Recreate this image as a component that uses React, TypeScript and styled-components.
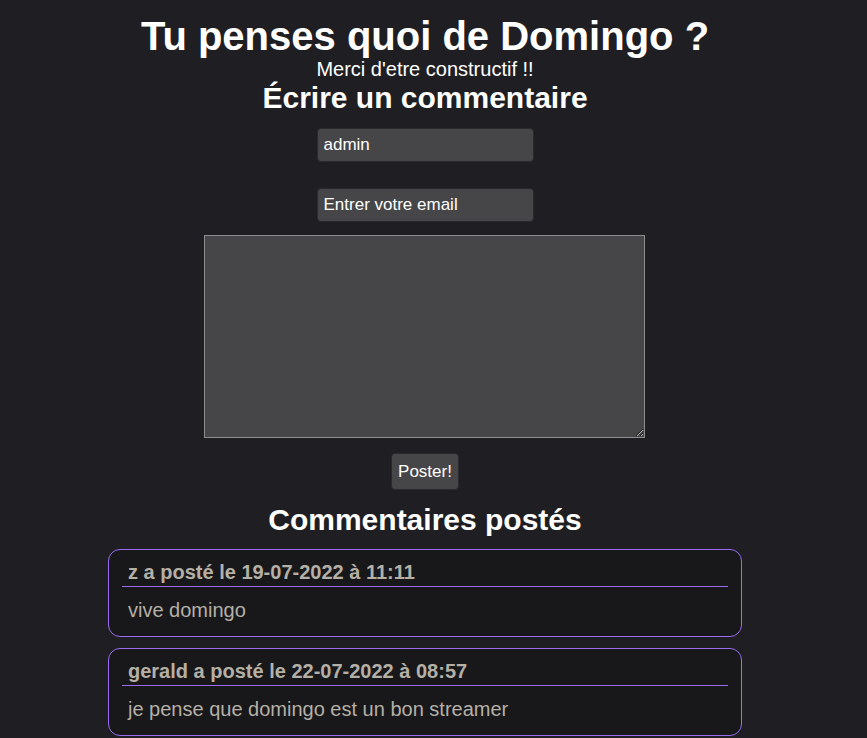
import React from "react";
import styled, { createGlobalStyle } from "styled-components";

const GlobalStyle = createGlobalStyle`
  body {
    margin: 0;
    background-color: #1f1f23;
    color: #ffffff;
    font-family: "Liberation Sans", Arial, sans-serif;
  }
`;

const Page = styled.div`
  display: flex;
  flex-direction: column;
  align-items: center;
  padding: 14px 17px 0 0;
`;

const Title = styled.h1`
  font-size: 40px;
  font-weight: bold;
  margin: 0;
  line-height: 44px;
`;

const Subtitle = styled.p`
  font-size: 20px;
  margin: 0;
  line-height: 23px;
`;

const SectionTitle = styled.h2<{ $top?: number }>`
  font-size: 30px;
  font-weight: bold;
  margin: ${(p) => p.$top ?? 0}px 0 0;
  line-height: 34px;
`;

const Form = styled.form`
  display: flex;
  flex-direction: column;
  align-items: center;
  margin-top: 13px;
`;

const Input = styled.input`
  box-sizing: border-box;
  width: 217px;
  height: 34px;
  margin: 0 0 26px;
  padding: 0 6px;
  border: 1px solid #2a2a2e;
  border-radius: 4px;
  background-color: #464649;
  color: #ffffff;
  font-family: inherit;
  font-size: 17px;
  &::placeholder {
    color: #ffffff;
  }
  &:last-of-type {
    margin-bottom: 13px;
  }
`;

const TextArea = styled.textarea`
  box-sizing: border-box;
  width: 441px;
  height: 203px;
  margin: 0 1px 0 0;
  border: 1px solid #8d8d8d;
  background-color: #464649;
  color: #ffffff;
  font-family: inherit;
  display: block;
`;

const Button = styled.button`
  margin-top: 15px;
  height: 37px;
  padding: 0 6px;
  border: 1px solid #2a2a2e;
  border-radius: 4px;
  background-color: #464649;
  color: #ffffff;
  font-family: inherit;
  font-size: 17px;
`;

const List = styled.div`
  display: flex;
  flex-direction: column;
  gap: 11px;
  width: 634px;
  margin-top: 12px;
`;

const Card = styled.div`
  box-sizing: border-box;
  border: 1px solid #9a6cf0;
  border-radius: 12px;
  background-color: #18181b;
  padding: 11px 13px 14px;
  color: #b5b0a6;
`;

const CardHeader = styled.h3`
  margin: 0;
  padding: 0 6px 2px;
  font-size: 20px;
  font-weight: bold;
  line-height: 23px;
  border-bottom: 1px solid #9a6cf0;
`;

const CardBody = styled.p`
  margin: 12px 0 0;
  padding: 0 6px;
  font-size: 20px;
  line-height: 23px;
`;

const comments = [
  { author: "z", date: "19-07-2022", time: "11:11", text: "vive domingo" },
  {
    author: "gerald",
    date: "22-07-2022",
    time: "08:57",
    text: "je pense que domingo est un bon streamer",
  },
];

export default function App() {
  return (
    <>
      <GlobalStyle />
      <Page>
        <Title>Tu penses quoi de Domingo ?</Title>
        <Subtitle>Merci d'etre constructif !!</Subtitle>
        <SectionTitle>Écrire un commentaire</SectionTitle>
        <Form onSubmit={(e) => e.preventDefault()}>
          <Input type="text" defaultValue="admin" />
          <Input type="email" placeholder="Entrer votre email" />
          <TextArea />
          <Button type="submit">Poster!</Button>
        </Form>
        <SectionTitle $top={13}>Commentaires postés</SectionTitle>
        <List>
          {comments.map((c) => (
            <Card key={c.author + c.time}>
              <CardHeader>
                {c.author} a posté le {c.date} à {c.time}
              </CardHeader>
              <CardBody>{c.text}</CardBody>
            </Card>
          ))}
        </List>
      </Page>
    </>
  );
}
